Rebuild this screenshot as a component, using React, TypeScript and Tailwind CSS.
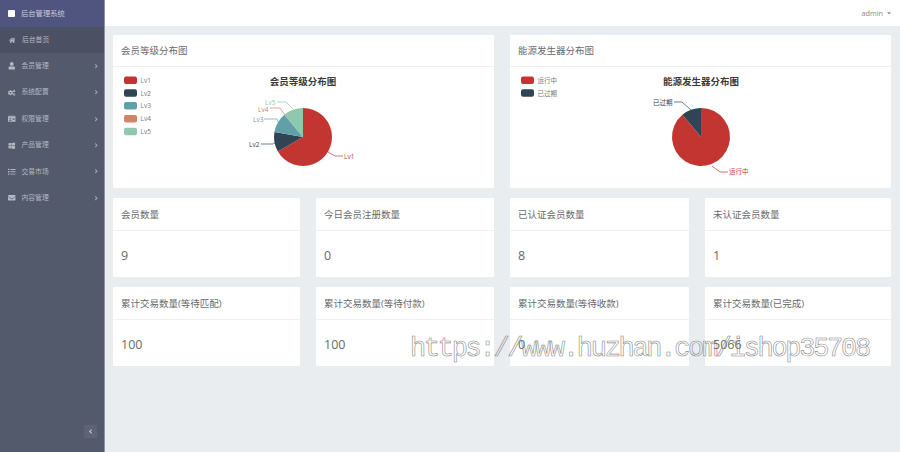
import { FaAngleLeft, FaAngleRight, FaCaretDown, FaCogs, FaEnvelope, FaHome, FaIdCard, FaList, FaUser, FaWindows } from "react-icons/fa";
import type { ReactNode } from "react";

const menu = [
  { label: "会员管理", icon: <FaUser /> },
  { label: "系统配置", icon: <FaCogs /> },
  { label: "权限管理", icon: <FaIdCard /> },
  { label: "产品管理", icon: <FaWindows /> },
  { label: "交易市场", icon: <FaList /> },
  { label: "内容管理", icon: <FaEnvelope /> },
];

const row1 = [
  { title: "会员数量", value: "9" },
  { title: "今日会员注册数量", value: "0" },
  { title: "已认证会员数量", value: "8" },
  { title: "未认证会员数量", value: "1" },
];

const row2 = [
  { title: "累计交易数量(等待匹配)", value: "100" },
  { title: "累计交易数量(等待付款)", value: "100" },
  { title: "累计交易数量(等待收款)", value: "0" },
  { title: "累计交易数量(已完成)", value: "5066" },
];

const CJK = "font-['Open_Sans','Noto_Sans_CJK_SC',sans-serif]";

// clockwise from 12 o'clock, degrees
function slice(cx: number, cy: number, r: number, from: number, to: number) {
  const pt = (a: number) => {
    const rad = (a * Math.PI) / 180;
    return `${(cx + r * Math.sin(rad)).toFixed(2)} ${(cy - r * Math.cos(rad)).toFixed(2)}`;
  };
  const large = to - from > 180 ? 1 : 0;
  return `M${cx} ${cy}L${pt(from)}A${r} ${r} 0 ${large} 1 ${pt(to)}Z`;
}

function Legend({ items }: { items: { name: string; color: string }[] }) {
  return (
    <>
      {items.map((it, i) => (
        <g key={it.name}>
          <rect x={11} y={9.5 + i * 12.8} width={13} height={7.5} rx={2} fill={it.color} />
          <text x={27.5} y={15.8 + i * 12.8} fontSize={6.5} fill="#777">
            {it.name}
          </text>
        </g>
      ))}
    </>
  );
}

function MemberChart() {
  return (
    <svg width={381} height={121} className={`block ${CJK}`}>
      <Legend
        items={[
          { name: "Lv1", color: "#c23531" },
          { name: "Lv2", color: "#2f4554" },
          { name: "Lv3", color: "#61a0a8" },
          { name: "Lv4", color: "#d48265" },
          { name: "Lv5", color: "#91c7ae" },
        ]}
      />
      <text x={190} y={17.5} textAnchor="middle" fontSize={9.5} fontWeight={700} fill="#3a3a3a">
        会员等级分布图
      </text>
      <path d={slice(190, 70, 29, 0, 240)} fill="#c23531" />
      <path d={slice(190, 70, 29, 240, 280)} fill="#2f4554" />
      <path d={slice(190, 70, 29, 280, 320)} fill="#61a0a8" />
      <path d={slice(190, 70, 29, 320, 360)} fill="#91c7ae" />
      <g fill="none" strokeWidth={0.7}>
        <path d="M215 85l7 4h8" stroke="#c23531" />
        <path d="M162 76l-2 1h-12" stroke="#2f4554" />
        <path d="M167 60l-3-8h-13" stroke="#61a0a8" />
        <path d="M172 48l-5-7h-10" stroke="#d48265" />
        <path d="M180 42l-7-7h-9" stroke="#91c7ae" />
      </g>
      <g fontSize={6.5}>
        <text x={231} y={91.5} fill="#c23531">Lv1</text>
        <text x={136} y={79.5} fill="#2f4554">Lv2</text>
        <text x={140} y={54.5} fill="#61a0a8">Lv3</text>
        <text x={145} y={45} fill="#d48265">Lv4</text>
        <text x={152} y={38.3} fill="#91c7ae">Lv5</text>
      </g>
    </svg>
  );
}

function EnergyChart() {
  return (
    <svg width={381} height={121} className={`block ${CJK}`}>
      <Legend
        items={[
          { name: "运行中", color: "#c23531" },
          { name: "已过期", color: "#2f4554" },
        ]}
      />
      <text x={191} y={17.5} textAnchor="middle" fontSize={9.5} fontWeight={700} fill="#3a3a3a">
        能源发生器分布图
      </text>
      <path d={slice(191, 70, 29, 0, 320)} fill="#c23531" />
      <path d={slice(191, 70, 29, 320, 360)} fill="#2f4554" />
      <g fill="none" strokeWidth={0.7}>
        <path d="M202 99l8 6h8" stroke="#c23531" />
        <path d="M181 43l-9-8h-8" stroke="#2f4554" />
      </g>
      <g fontSize={6.5}>
        <text x={219} y={107.3} fill="#c23531">运行中</text>
        <text x={143} y={38.3} fill="#2f4554">已过期</text>
      </g>
    </svg>
  );
}

function ChartCard({ title, children }: { title: string; children: ReactNode }) {
  return (
    <div className="h-[153px] rounded-[1px] bg-white">
      <div className="flex h-[32px] items-center border-b border-[#eef0f3] px-2 pt-[1px] text-[9.5px] text-[#676a6c]">
        {title}
      </div>
      {children}
    </div>
  );
}

function StatCard({ title, value }: { title: string; value: string }) {
  return (
    <div className="h-[79px] rounded-[1px] bg-white">
      <div className="flex h-[33px] items-center border-b border-[#eef0f3] px-2 pt-[2px] text-[9.5px] text-[#676a6c]">
        {title}
      </div>
      <div className="flex h-[46px] items-center px-2 pt-[4px] text-[12.5px] text-[#676a6c]">{value}</div>
    </div>
  );
}

export default function App() {
  return (
    <div className={`relative flex h-[452px] w-[900px] overflow-hidden bg-[#e9edf0] ${CJK}`}>
      {/* sidebar */}
      <aside className="flex h-full w-[105px] shrink-0 flex-col border-r border-[#8f96a3] bg-[#525a6c] text-[6.8px] text-[#b4b8c1]">
        <div className="flex h-[26.7px] items-center gap-[6px] bg-[#50557f] pl-[8px] text-[7.3px] text-[#c8cad8]">
          <span className="h-[7px] w-[7px] rounded-[1px] bg-white" />
          后台管理系统
        </div>
        <div className="flex h-[26.3px] items-center gap-[7px] bg-[#4b5162] pl-[8.5px]">
          <span className="w-[6.5px] text-[6.5px] leading-none"><FaHome /></span>
          后台首页
        </div>
        {menu.map((m) => (
          <div key={m.label} className="flex h-[26.4px] items-center gap-[6px] pl-[8px] pr-[5px]">
            <span className="w-[7.5px] text-[7.5px] leading-none">{m.icon}</span>
            <span className="flex-1">{m.label}</span>
            <span className="text-[6.5px] leading-none text-[#a6aab4]"><FaAngleRight /></span>
          </div>
        ))}
        <div className="mt-auto mb-[14px] ml-[84px] flex h-[13px] w-[13px] items-center justify-center bg-[#5e6476] text-[7px] text-[#c3c7cf]">
          <FaAngleLeft />
        </div>
      </aside>

      <div className="flex min-w-0 flex-1 flex-col">
        {/* top bar */}
        <header className="flex h-[26px] items-center justify-end gap-[3px] bg-white pr-[8px] text-[7.3px] text-[#8a8a8a]">
          admin
          <FaCaretDown className="text-[6px]" />
        </header>

        <main className="flex flex-col gap-[10px] pl-[8px] pt-[9px]">
          <div className="grid grid-cols-[381px_381px] gap-[16px]">
            <ChartCard title="会员等级分布图"><MemberChart /></ChartCard>
            <ChartCard title="能源发生器分布图"><EnergyChart /></ChartCard>
          </div>
          <div className="grid grid-cols-[187px_178px_179px_186px] gap-[16px]">
            {row1.map((c) => <StatCard key={c.title} {...c} />)}
          </div>
          <div className="grid grid-cols-[187px_178px_179px_186px] gap-[16px]">
            {row2.map((c) => <StatCard key={c.title} {...c} />)}
          </div>
        </main>
      </div>

      {/* watermark */}
      <div className="pointer-events-none absolute left-[410px] top-[332px] whitespace-nowrap font-['Liberation_Mono',monospace] text-[27px] leading-[34px] tracking-[-2.3px] text-transparent opacity-[0.99] [-webkit-text-stroke:0.6px_#8c8c8c]">
        https://www.huzhan.com/ishop35708
      </div>
    </div>
  );
}
